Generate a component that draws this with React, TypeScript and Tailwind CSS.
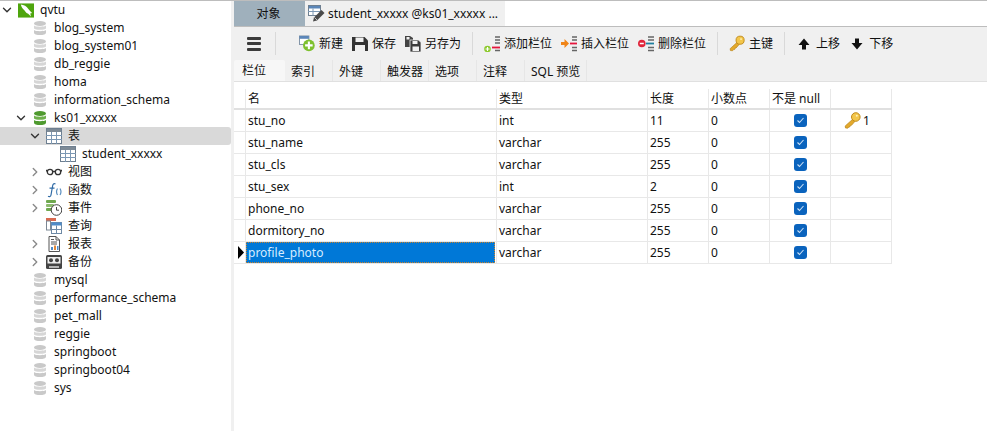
import React from 'react'
import { ChevronDown, ChevronRight } from 'lucide-react'

const DbIcon = ({ on = false }: { on?: boolean }) => {
  const top = on ? '#4f9a2f' : '#c9c9c9'
  const mid = on ? '#6fb04c' : '#d6d6d6'
  return (
    <svg width="16" height="16" viewBox="0 0 16 16">
      <ellipse cx="8" cy="3.500" rx="6" ry="2.500" fill={top} />
      <path d="M2 5.500c1 1.600 11 1.600 12 0v3c-1 1.800-11 1.800-12 0z" fill={mid} />
      <path d="M2 10c1 1.600 11 1.600 12 0v2.500C14 14.400 11 15 8 15s-6-.6-6-2.500z" fill={top} />
    </svg>
  )
}

const MysqlIcon = () => (
  <svg width="17" height="15" viewBox="0 0 17 15">
    <rect width="17" height="15" fill="#4ea50d" />
    <path d="M3 1c3 .2 6.500 2 8 5 1 1.600 2.500 3 4 4.200l-2 .5.800 3.300-3-3C8 10 8 8.500 6.500 7 5 5.500 3.500 3.500 3 1z" fill="#fff" />
  </svg>
)

const TableIcon = ({ head = '#7d8a96' }: { head?: string }) => (
  <svg width="16" height="16" viewBox="0 0 16 16">
    <rect x="0.500" y="0.500" width="15" height="15" fill="#fff" stroke="#6e7f90" />
    <rect x="1" y="1" width="14" height="3" fill={head} />
    <path d="M0 7.500h16M0 11.500h16M5.500 4v12M10.500 4v12" stroke="#7c98b4" strokeWidth="1" />
  </svg>
)

const EditTableIcon = () => (
  <svg width="18" height="18" viewBox="0 0 18 18">
    <rect x="0.500" y="0.500" width="12" height="10" fill="#fff" stroke="#6e7f90" />
    <rect x="1" y="1" width="11" height="2.500" fill="#5b86b8" />
    <path d="M0 6.500h12M5 3.500v7" stroke="#7c98b4" />
    <path d="m5 16.500 1-4 7.500-7.500 3 3L9 15.500z" fill="#4a4a4a" />
    <path d="m6.500 12.500 2.500 2.500" stroke="#ddd" strokeWidth="0.800" />
  </svg>
)

const GlassesIcon = () => (
  <svg width="16" height="16" viewBox="0 0 16 16" fill="none" stroke="#333" strokeWidth="1.300">
    <circle cx="4" cy="8" r="2.700" />
    <circle cx="12" cy="8" r="2.700" />
    <path d="M6.700 7.500h2.600M1.400 7.500 0 6M14.600 7.500 16 6" />
  </svg>
)

const FuncIcon = () => (
  <svg width="16" height="16" viewBox="0 0 16 16" fill="none" stroke="#2f6aa5" strokeWidth="1.200">
    <path d="M9.500 2C7.500 1 6.800 2.500 6.500 4.500L5 13c-.3 1.500-1.500 2-3 1.200M3.500 6.200h5" />
    <path d="M11.500 6.500c-1.200 2-1.200 4.500 0 6.500M14 6.500c1.200 2 1.200 4.500 0 6.500" stroke="#5b8fc0" />
  </svg>
)

const EventIcon = () => (
  <svg width="16" height="16" viewBox="0 0 16 16">
    <rect x="0" y="0" width="10" height="3" rx="1" fill="#6fa84f" />
    <rect x="0" y="4" width="8" height="3" rx="1" fill="#8dbb6f" />
    <rect x="0" y="8" width="6" height="3" rx="1" fill="#6fa84f" />
    <circle cx="10.500" cy="10" r="5.300" fill="#fff" stroke="#444" />
    <path d="M10.500 7v3.200h2.500" fill="none" stroke="#444" />
  </svg>
)

const QueryIcon = () => (
  <svg width="16" height="16" viewBox="0 0 16 16">
    <rect x="0" y="0" width="10" height="3" fill="#d9694f" />
    <rect x="0.500" y="3" width="4" height="9" fill="#fff" stroke="#7b8794" />
    <rect x="5.500" y="4.500" width="10" height="11" fill="#fff" stroke="#6e8aa6" />
    <rect x="5.500" y="4.500" width="10" height="3" fill="#4f8cc9" />
    <path d="M5.500 11.500h10M10.500 7.500v8" stroke="#6e8aa6" />
  </svg>
)

const ReportIcon = () => (
  <svg width="16" height="16" viewBox="0 0 16 16" fill="none">
    <path d="M3 .500h7l3.500 3.500v11.500H3z" fill="#fff" stroke="#555" />
    <path d="M10 .500V4h3.500M5 3.500h3M5 6h6M5 8h6" stroke="#555" />
    <rect x="5" y="11" width="2" height="3" fill="#4f8cc9" />
    <rect x="8" y="9.500" width="2" height="4.500" fill="#e08a3c" />
    <rect x="11" y="10" width="1.500" height="4" fill="#4f8cc9" />
  </svg>
)

const BackupIcon = () => (
  <svg width="16" height="16" viewBox="0 0 16 16">
    <rect x="0" y="1" width="16" height="14" rx="1.500" fill="#444" />
    <rect x="1.500" y="3" width="13" height="6.500" fill="#eee" />
    <circle cx="5" cy="6.200" r="2" fill="#444" />
    <circle cx="11" cy="6.200" r="2" fill="#444" />
    <path d="M3 13h10" stroke="#ddd" strokeWidth="1.500" />
  </svg>
)

const KeyIcon = () => (
  <svg width="17" height="17" viewBox="0 0 17 17" fill="none">
    <path d="M9.500 6.500 1.200 14l.3 2 2.300.2 1-1.200 1.200-.2.300-1.300 1.200-.2 3.500-4" fill="#e3a92c" stroke="#b98418" strokeWidth="0.700" />
    <circle cx="11.800" cy="5" r="4.300" fill="#f3c64a" stroke="#c08a1a" />
    <circle cx="12.800" cy="3.800" r="1" fill="#fff2b8" />
  </svg>
)

const NewIcon = () => (
  <svg width="17" height="17" viewBox="0 0 17 17">
    <rect x="0.500" y="0.500" width="10" height="9" fill="#fff" stroke="#7c8fa3" />
    <rect x="0.500" y="0.500" width="10" height="3" fill="#5b86b8" />
    <circle cx="10.500" cy="10.500" r="6.200" fill="#7ec02e" />
    <path d="M10.500 6.500v8M6.500 10.500h8" stroke="#fff" strokeWidth="2.200" />
  </svg>
)

const SaveIcon = () => (
  <svg width="16" height="16" viewBox="0 0 16 16">
    <path d="M0 1h12.500L16 4.500V15H0z" fill="#333" />
    <rect x="3.500" y="1.500" width="8" height="4.500" fill="#f0f0f0" />
    <rect x="3" y="9" width="10" height="6" fill="#f0f0f0" />
  </svg>
)

const SaveAsIcon = () => (
  <svg width="16" height="16" viewBox="0 0 16 16">
    <path d="M0 0h5l3 2v9H0z" fill="#444" />
    <rect x="1.500" y="1" width="3" height="2.500" fill="#f0f0f0" />
    <path d="M5 4h8.500L16 6.500V16H5z" fill="#3b3b3b" stroke="#f0f0f0" strokeWidth="0.800" />
    <rect x="7.500" y="5" width="5" height="3" fill="#f0f0f0" />
    <rect x="7.500" y="10.500" width="6.500" height="4.500" fill="#f0f0f0" />
  </svg>
)

const AddColIcon = () => (
  <svg width="16" height="16" viewBox="0 0 16 16">
    <path d="M11 1h5M11 4h5M11 7h5M11 14.500h5" stroke="#666" strokeWidth="1.500" />
    <path d="M8 11.500h8" stroke="#e5163c" strokeWidth="1.800" />
    <circle cx="3.500" cy="13" r="3.300" fill="#8cc92c" />
    <path d="M3.500 11v4M1.500 13h4" stroke="#fff" strokeWidth="1.200" />
  </svg>
)

const InsertColIcon = () => (
  <svg width="16" height="16" viewBox="0 0 16 16">
    <path d="M11 1h5M11 4h5M11 11.500h5M11 14.500h5" stroke="#666" strokeWidth="1.500" />
    <path d="M9 7.500h7" stroke="#e5163c" strokeWidth="1.800" />
    <path d="M0 6h3.500V3L8 7.500 3.500 12V9H0z" fill="#f08519" />
  </svg>
)

const DeleteColIcon = () => (
  <svg width="16" height="16" viewBox="0 0 16 16">
    <path d="M10 1h6M10 4h6M10 11.500h6M10 14.500h6" stroke="#666" strokeWidth="1.500" />
    <path d="M8 7.500h8" stroke="#1f7f9f" strokeWidth="1.800" />
    <circle cx="3.800" cy="7.500" r="3.800" fill="#e0243a" />
    <path d="M1.800 7.500h4" stroke="#fff" strokeWidth="1.500" />
  </svg>
)

const ArrowIcon = ({ down = false }: { down?: boolean }) => (
  <svg width="16" height="16" viewBox="0 0 16 16">
    <path
      d={down ? 'M6 2.500h4V7h3.500L8 13.500 2.500 7H6z' : 'M6 13.500h4V9h3.500L8 2.500 2.500 9H6z'}
      fill="#111"
    />
  </svg>
)

const CheckBox = () => (
  <span className="flex h-[13px] w-[13px] items-center justify-center rounded-[3px] bg-[#0a63bd]">
    <svg width="9" height="9" viewBox="0 0 9 9" fill="none" stroke="#c9dff5" strokeWidth="1.100">
      <path d="m1.500 4.500 2 2 4-4.500" />
    </svg>
  </span>
)

type TreeRow = {
  label: string
  depth: 0 | 1 | 2 | 3
  icon: React.ReactNode
  arrow?: 'open' | 'closed'
  active?: boolean
}

const db = (label: string): TreeRow => ({ label, depth: 1, icon: <DbIcon /> })

const treeRows: TreeRow[] = [
  { label: 'qvtu', depth: 0, icon: <MysqlIcon />, arrow: 'open' },
  db('blog_system'),
  db('blog_system01'),
  db('db_reggie'),
  db('homa'),
  db('information_schema'),
  { label: 'ks01_xxxxx', depth: 1, icon: <DbIcon on />, arrow: 'open' },
  { label: '表', depth: 2, icon: <TableIcon />, arrow: 'open', active: true },
  { label: 'student_xxxxx', depth: 3, icon: <TableIcon /> },
  { label: '视图', depth: 2, icon: <GlassesIcon />, arrow: 'closed' },
  { label: '函数', depth: 2, icon: <FuncIcon />, arrow: 'closed' },
  { label: '事件', depth: 2, icon: <EventIcon />, arrow: 'closed' },
  { label: '查询', depth: 2, icon: <QueryIcon /> },
  { label: '报表', depth: 2, icon: <ReportIcon />, arrow: 'closed' },
  { label: '备份', depth: 2, icon: <BackupIcon />, arrow: 'closed' },
  db('mysql'),
  db('performance_schema'),
  db('pet_mall'),
  db('reggie'),
  db('springboot'),
  db('springboot04'),
  db('sys'),
]

const depthClass = ['pl-[2px]', 'pl-4', 'pl-[30px]', 'pl-[44px]']

const columns = [
  { name: 'stu_no', type: 'int', len: '11', key: true },
  { name: 'stu_name', type: 'varchar', len: '255' },
  { name: 'stu_cls', type: 'varchar', len: '255' },
  { name: 'stu_sex', type: 'int', len: '2' },
  { name: 'phone_no', type: 'varchar', len: '255' },
  { name: 'dormitory_no', type: 'varchar', len: '255' },
  { name: 'profile_photo', type: 'varchar', len: '255', selected: true },
]

const Sep = () => <span className="mx-[11px] h-[23px] w-px bg-[#d9d9d9]" />

const ToolButton = ({ icon, label }: { icon: React.ReactNode; label: string }) => (
  <span className="flex items-center gap-1 whitespace-nowrap text-[#111]">
    <span className="flex h-4 w-4 items-center justify-center">{icon}</span>
    <span className="pt-px">{label}</span>
  </span>
)

const subTabs = ['索引', '外键', '触发器', '选项', '注释']
const cell = 'flex items-center border-r border-[#e8e8e8] pl-[2px]'
const gridCols = 'grid h-[22px] grid-cols-[12px_251px_151px_61px_61px_61px_61px]'

export default function App() {
  return (
    <div className="flex h-[431px] w-[987px] overflow-hidden border-t border-[#bdbdbd] bg-white font-['Noto_Sans','Noto_Sans_CJK_SC',sans-serif] text-[12px] leading-none text-[#111]">
      <aside className="w-[231px] shrink-0">
        {treeRows.map((row) => (
          <div
            key={row.label}
            className={`flex h-[18px] items-center ${depthClass[row.depth]} ${
              row.active ? 'rounded-r-[3px] bg-[#d9d9d9]' : ''
            }`}
          >
            <span className="flex h-4 w-4 items-center">
              {row.arrow === 'open' && <ChevronDown size={14} strokeWidth={2.4} className="-ml-[2px] text-[#333]" />}
              {row.arrow === 'closed' && <ChevronRight size={14} strokeWidth={2.4} className="-ml-[2px] text-[#8a8a8a]" />}
            </span>
            <span className="flex h-4 w-4 items-center justify-center">{row.icon}</span>
            <span className="ml-[6px] whitespace-nowrap">{row.label}</span>
          </div>
        ))}
      </aside>

      <main className="flex min-w-0 flex-1 flex-col border-l-[3px] border-[#f0f0f0]">
        <div className="flex h-[26px] shrink-0 border-b border-[#bdbdbd] bg-white">
          <div className="flex w-[71px] items-center justify-center bg-[#9fb0bc] pt-px pr-[2px]">对象</div>
          <div className="flex w-[200px] items-center gap-[2px] bg-[#f0f0f0] pl-[3px]">
            <EditTableIcon />
            <span className="whitespace-nowrap pt-px">student_xxxxx @ks01_xxxxx ...</span>
          </div>
        </div>

        <div className="flex h-[33px] shrink-0 items-center bg-[#f0f0f0] pl-[13px]">
          <span className="flex w-[14px] flex-col gap-[2.500px]">
            <span className="h-[3px] rounded-[1px] bg-[#3b3b3b]" />
            <span className="h-[3px] rounded-[1px] bg-[#3b3b3b]" />
            <span className="h-[3px] rounded-[1px] bg-[#3b3b3b]" />
          </span>
          <span className="ml-[14px] mr-[23px] h-[23px] w-px bg-[#d9d9d9]" />
          <div className="flex items-center gap-[9px]">
            <ToolButton icon={<NewIcon />} label="新建" />
            <ToolButton icon={<SaveIcon />} label="保存" />
            <ToolButton icon={<SaveAsIcon />} label="另存为" />
          </div>
          <Sep />
          <div className="flex items-center gap-[9px]">
            <ToolButton icon={<AddColIcon />} label="添加栏位" />
            <ToolButton icon={<InsertColIcon />} label="插入栏位" />
            <ToolButton icon={<DeleteColIcon />} label="删除栏位" />
          </div>
          <Sep />
          <ToolButton icon={<KeyIcon />} label="主键" />
          <Sep />
          <div className="flex items-center gap-[9px]">
            <ToolButton icon={<ArrowIcon />} label="上移" />
            <ToolButton icon={<ArrowIcon down />} label="下移" />
          </div>
        </div>

        <div className="flex h-[22px] shrink-0 border-b border-[#e0e0e0] bg-[#f0f0f0]">
          <div className="flex w-[51px] items-center rounded-t-[2px] bg-[#f7f7f7] pl-2">栏位</div>
          {subTabs.map((tab) => (
            <div key={tab} className="flex w-12 items-center border-r border-[#e6e6e6] pl-[6px] pt-[2px]">
              {tab}
            </div>
          ))}
          <div className="flex w-[62px] items-center border-r border-[#e6e6e6] pl-[6px] pt-[2px]">SQL 预览</div>
        </div>

        <div className="mt-[6px] w-[658px]">
          <div className={`${gridCols} border-b-2 border-[#e0e0e0] pt-px`}>
            <div className={cell} />
            <div className={cell}>名</div>
            <div className={cell}>类型</div>
            <div className={cell}>长度</div>
            <div className={cell}>小数点</div>
            <div className={cell}>不是 null</div>
            <div className={cell} />
          </div>
          {columns.map((col) => (
            <div key={col.name} className={`${gridCols} border-b border-[#e8e8e8]`}>
              <div className={cell}>
                {col.selected && (
                  <svg width="8" height="13" viewBox="0 0 8 13" className="ml-px shrink-0">
                    <path d="M1 0 7 6.500 1 13z" fill="#000" />
                  </svg>
                )}
              </div>
              {col.selected ? (
                <div className="flex items-center border-r border-[#e8e8e8]">
                  <span className="flex h-full w-[249px] items-center border border-dotted border-[#c9842f] bg-[#0078d7] px-px text-[#d6ecff]">
                    {col.name}
                  </span>
                </div>
              ) : (
                <div className={cell}>{col.name}</div>
              )}
              <div className={cell}>{col.type}</div>
              <div className={cell}>{col.len}</div>
              <div className={cell}>0</div>
              <div className={`${cell} justify-center !pl-0`}>
                <CheckBox />
              </div>
              <div className={`${cell} !pl-[13px]`}>
                {col.key && (
                  <>
                    <KeyIcon />
                    <span className="ml-[2px]">1</span>
                  </>
                )}
              </div>
            </div>
          ))}
        </div>
      </main>
    </div>
  )
}
